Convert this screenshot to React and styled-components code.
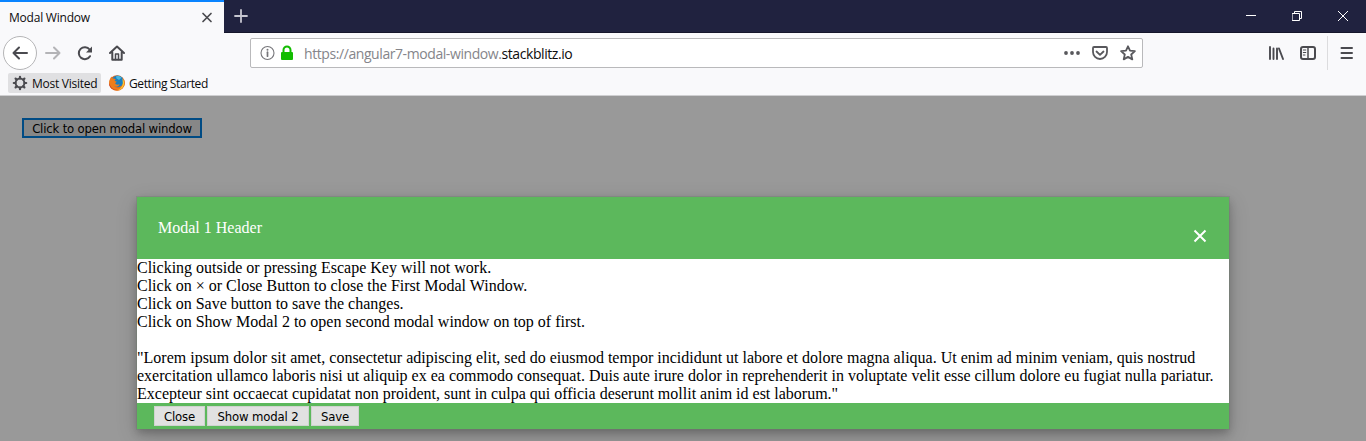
import React from 'react';
import styled, { createGlobalStyle } from 'styled-components';

const ui = '"Open Sans", "Noto Sans", sans-serif';
const control = '"DejaVu Sans Condensed", "DejaVu Sans", sans-serif';

const GlobalStyle = createGlobalStyle`
  * { box-sizing: border-box; }
  body { margin: 0; overflow: hidden; background: #999; }
`;

const Window = styled.div`
  display: flex;
  flex-direction: column;
  width: 1366px;
  height: 441px;
  overflow: hidden;
`;

const TabStrip = styled.div`
  display: flex;
  height: 33px;
  background: #20223f;
  border-bottom: 1px solid #15162b;
`;

const Tab = styled.div`
  display: flex;
  align-items: center;
  justify-content: space-between;
  width: 224px;
  height: 33px;
  padding: 0 11px 0 9px;
  background: #f9f9fb;
  border-top: 2px solid #0a84ff;
`;

const Label = styled.span`
  padding-top: ${(p) => p.$drop || 0}px;
  font: 12px/16px ${ui};
  letter-spacing: ${(p) => p.$spacing}px;
  color: #0c0c0d;
  white-space: nowrap;
`;

const NewTab = styled.div`
  padding: 9px 0 0 10px;
  height: 32px;
  svg { display: block; }
`;

const WindowControls = styled.div`
  display: flex;
  margin-left: auto;
  height: 32px;
`;

const WindowButton = styled.div`
  display: flex;
  align-items: center;
  justify-content: center;
  width: 46px;
  height: 32px;
`;

const NavBar = styled.div`
  display: flex;
  align-items: center;
  height: 38px;
  padding: 2px 0 0 3px;
  background: #f9f9fb;
`;

const BackButton = styled.div`
  display: flex;
  align-items: center;
  justify-content: center;
  width: 34px;
  height: 34px;
  border: 1px solid #b5b5b7;
  border-radius: 50%;
  background: #fff;
`;

const NavIcon = styled.div`
  width: 16px;
  height: 16px;
  margin-left: ${(p) => p.$gap}px;
  svg { display: block; }
`;

const UrlBar = styled.div`
  display: flex;
  align-items: center;
  width: 893px;
  height: 30px;
  margin-left: 125px;
  padding: 0 6px 0 9px;
  border: 1px solid #b9b9bb;
  border-radius: 2px;
  background: #fff;
`;

const Url = styled.span`
  margin: 2px auto 0 7px;
  font: 14px/20px ${ui};
  letter-spacing: -0.42px;
  color: #85858a;
  white-space: nowrap;
  b { font-weight: 400; color: #0c0c0d; }
`;

const Divider = styled.div`
  width: 1px;
  height: 34px;
  margin-left: 11px;
  background: #dcdcde;
`;

const Bookmarks = styled.div`
  display: flex;
  align-items: flex-start;
  gap: 4px;
  height: 25px;
  padding: 2px 0 0 8px;
  background: #f9f9fb;
  border-bottom: 1px solid #cfcfd1;
`;

const Bookmark = styled.div`
  display: flex;
  align-items: center;
  gap: 4px;
  width: ${(p) => p.$width}px;
  height: 20px;
  padding-left: 4px;
  border-radius: 2px;
  background: ${(p) => (p.$active ? '#e0e0e2' : 'transparent')};
`;

const Page = styled.main`
  position: relative;
  flex: 1;
  padding: 22px;
  background: #999;
`;

const OpenButton = styled.button`
  display: block;
  width: 180px;
  height: 20px;
  padding: 1px 0 0;
  border: 2px solid #004b84;
  background: #878787;
  font: 13px/15px ${control};
  letter-spacing: -0.18px;
  color: #000;
  white-space: nowrap;
`;

const Modal = styled.section`
  position: absolute;
  top: 101px;
  left: 137px;
  width: 1092px;
  background: #fff;
  box-shadow: 0 0 0 1px rgba(110, 125, 110, 0.35), 0 4px 8px rgba(0, 0, 0, 0.2), 0 6px 20px rgba(0, 0, 0, 0.19);
  font: 16px/18px "Liberation Serif", serif;
  color: #000;
`;

const ModalHeader = styled.header`
  display: flex;
  justify-content: space-between;
  height: 62px;
  padding: 22px 22px 0 21px;
  background: #5cb85c;
  color: #fff;
`;

const CloseMark = styled.div`
  padding-top: 10px;
  svg { display: block; }
`;

const ModalBody = styled.div`
  height: 144px;
  white-space: nowrap;
`;

const ModalFooter = styled.footer`
  display: flex;
  gap: 2px;
  height: 26px;
  padding: 3px 17px;
  background: #5cb85c;
`;

const FooterButton = styled.button`
  width: ${(p) => p.$width}px;
  height: 20px;
  padding: 2px 0 0;
  border: 1px solid #cfd3cf;
  background: #e1e1e1;
  font: 13px/16px ${control};
  letter-spacing: -0.14px;
  color: #000;
  white-space: nowrap;
`;

const Icon = ({ size = 16, color = '#4a4a4f', width = 2, children }) => (
  <svg width={size} height={size} viewBox={`0 0 ${size} ${size}`} fill="none" stroke={color} strokeWidth={width} strokeLinecap="round" strokeLinejoin="round">
    {children}
  </svg>
);

const Gear = () => (
  <Icon size={16}>
    <circle cx="8" cy="8" r="4.4" />
    <path d="M8 1.800v1.600M8 12.600v1.600M1.800 8h1.600M12.600 8h1.600M3.600 3.600l1.200 1.200M11.200 11.200l1.200 1.200M3.600 12.400l1.200-1.200M11.200 4.800l1.200-1.200" strokeWidth="2.200" />
  </Icon>
);

const Firefox = () => (
  <svg width="16" height="16" viewBox="0 0 16 16">
    <circle cx="8" cy="8" r="7.8" fill="#e66a1c" />
    <circle cx="8.6" cy="6.4" r="5.8" fill="#1b7fc0" />
    <path d="M7 1.5c2-.9 4.500-.2 5.600 1.300L10 5 7.500 3.500z" fill="#46b8df" />
    <path d="M.5 5.500C1 3.500 1.800 2.500 2.500 1.500c.2 1 .6 1.500 1.200 2 1.300-.2 2.300.1 3 .8L5.500 6l2.200.6-1.500 1.600c.8 1.800 3 1.700 4.300.8-.5 3-4 3.500-6 1.500 2.500 4 8.500 3.500 9.800-3.500.7-2-.1-3.600-.8-4.500 2.600 2.300 3 6.200 1.500 8.800-3 5.500-11 5.500-13.800.2C-.1 9.500 0 7.200.5 5.500z" fill="#ed7d1c" />
    <path d="M13.500 3.500c1.800 2.500 2.200 5.300.8 8-1.300 2.200-3.500 3.600-5.500 3.800 3.500-1.800 5.600-5.500 4.900-8.300z" fill="#fbc934" />
    <path d="M.5 8c.5 4 3.500 6.800 7.500 6.800-3.500.9-7.200-1.500-7.800-5z" fill="#c93c20" />
  </svg>
);

export default function App() {
  return (
    <Window>
      <GlobalStyle />
      <TabStrip>
        <Tab>
          <Label $spacing={-0.22}>Modal Window</Label>
          <Icon size={12} width={1.7}><path d="M2 1.500l8 8M10 1.500l-8 8" /></Icon>
        </Tab>
        <NewTab>
          <Icon size={14} color="#c6c6d0" width={1.8}><path d="M7 1v12M1 7h12" /></Icon>
        </NewTab>
        <WindowControls>
          <WindowButton><Icon size={10} color="#fff" width={1}><path d="M0 4.500h10" strokeLinecap="butt" /></Icon></WindowButton>
          <WindowButton>
            <Icon size={10} color="#fff" width={1}><path d="M.5 2.500h7v7h-7zM2.500 2.500v-2h7v7h-2" /></Icon>
          </WindowButton>
          <WindowButton><Icon size={10} color="#fff" width={1}><path d="M0 0l10 10M10 0L0 10" /></Icon></WindowButton>
        </WindowControls>
      </TabStrip>
      <NavBar>
        <BackButton><Icon><path d="M15 8H1.500M7 2.500L1.500 8 7 13.500" /></Icon></BackButton>
        <NavIcon $gap={8}><Icon color="#b4b4b7"><path d="M1 8h13.500M9 2.500L14.500 8 9 13.500" /></Icon></NavIcon>
        <NavIcon $gap={16}>
          <Icon><path d="M13 11.200A6 6 0 1 1 12.600 4.500" /><path d="M15 1.500v6H9z" fill="#4a4a4f" stroke="none" /></Icon>
        </NavIcon>
        <NavIcon $gap={16}>
          <Icon><path d="M1 8l7-6.500L15 8M3.300 7.500v7.200h9.400V7.500" /><path d="M6.500 14.500V9h3v5.500" strokeWidth="1.500" /></Icon>
        </NavIcon>
        <UrlBar>
          <Icon color="#76767a" width={1.100}>
            <circle cx="7.500" cy="8" r="6.500" /><path d="M7.500 7.200v4" strokeWidth="1.700" /><path d="M7.500 4.700v.1" strokeWidth="2" />
          </Icon>
          <svg width="21" height="16" viewBox="0 0 21 16"><path d="M7.500 8V5a3.500 3.500 0 0 1 7 0v3" fill="none" stroke="#12bc00" strokeWidth="2" /><rect x="5" y="7" width="12" height="8" rx="1" fill="#12bc00" /></svg>
          <Url>https://angular7-modal-window.<b>stackblitz.io</b></Url>
          <NavIcon $gap={0}><svg width="16" height="16" fill="#58585c"><circle cx="2" cy="8" r="1.900" /><circle cx="8" cy="8" r="1.900" /><circle cx="14" cy="8" r="1.900" /></svg></NavIcon>
          <NavIcon $gap={12}><Icon color="#58585c"><path d="M2 2h12a1 1 0 0 1 1 1v4a7 7 0 0 1-14 0V3a1 1 0 0 1 1-1zM4.500 6.500L8 9.800l3.500-3.300" strokeWidth="1.800" /></Icon></NavIcon>
          <NavIcon $gap={12}><Icon color="#58585c"><path d="M8 1.300l2 4.400 4.900.5-3.700 3.300 1.100 4.900L8 11.900l-4.300 2.500 1.100-4.900L1.100 6.200 6 5.700z" strokeWidth="1.800" /></Icon></NavIcon>
        </UrlBar>
        <NavIcon $gap={125}><Icon><path d="M2 2v12M5.500 3.500V14M9 3.500V14M11 3.500L15 14" strokeWidth="1.900" /></Icon></NavIcon>
        <NavIcon $gap={16}><Icon><rect x="1" y="2" width="14" height="12" rx="2" /><path d="M8 2v12" strokeWidth="1.500" /><path d="M3.300 5h2.500M3.300 7.500h2.500M3.300 10h1.700" strokeWidth="1" /></Icon></NavIcon>
        <Divider />
        <NavIcon $gap={11}><Icon><path d="M2.500 3h10.500M2.500 8h10.500M2.500 13h10.500" /></Icon></NavIcon>
      </NavBar>
      <Bookmarks>
        <Bookmark $active $width={93}><Gear /><Label $spacing={-0.26} $drop={2}>Most Visited</Label></Bookmark>
        <Bookmark $width={110}><Firefox /><Label $spacing={-0.4} $drop={2}>Getting Started</Label></Bookmark>
      </Bookmarks>
      <Page>
        <OpenButton>Click to open modal window</OpenButton>
        <Modal>
          <ModalHeader>
            <span>Modal 1 Header</span>
            <CloseMark><Icon size={14} color="#fff" width={2}><path d="M1.500 1.500l11 11M12.500 1.500l-11 11" strokeLinecap="butt" /></Icon></CloseMark>
          </ModalHeader>
          <ModalBody>
            Clicking outside or pressing Escape Key will not work.<br />
            Click on × or Close Button to close the First Modal Window.<br />
            Click on Save button to save the changes.<br />
            Click on Show Modal 2 to open second modal window on top of first.<br />
            <br />
            "Lorem ipsum dolor sit amet, consectetur adipiscing elit, sed do eiusmod tempor incididunt ut labore et dolore magna aliqua. Ut enim ad minim veniam, quis nostrud<br />
            exercitation ullamco laboris nisi ut aliquip ex ea commodo consequat. Duis aute irure dolor in reprehenderit in voluptate velit esse cillum dolore eu fugiat nulla pariatur.<br />
            Excepteur sint occaecat cupidatat non proident, sunt in culpa qui officia deserunt mollit anim id est laborum."
          </ModalBody>
          <ModalFooter>
            <FooterButton $width={51}>Close</FooterButton>
            <FooterButton $width={102}>Show modal 2</FooterButton>
            <FooterButton $width={48}>Save</FooterButton>
          </ModalFooter>
        </Modal>
      </Page>
    </Window>
  );
}
